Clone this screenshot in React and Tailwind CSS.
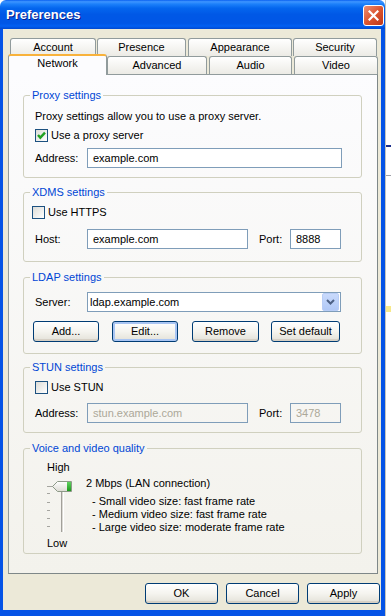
import React from "react";

const font = "font-['Liberation_Sans',Arial,sans-serif]";

const CheckBox = ({ checked, className = "" }) => (
  <span className={`w-[13px] h-[13px] border border-[#1C5180] bg-linear-to-br from-[#DCDCD7] to-white flex items-center justify-center shrink-0 ${className}`}>
    {checked && (
      <svg width="11" height="11" viewBox="0 0 11 11">
        <path d="M2 5 L4.3 7.6 L9 2.6" stroke="#21A121" strokeWidth="2.4" fill="none" />
      </svg>
    )}
  </span>
);

const Field = ({ value, width, disabled }) => (
  <div
    className={`h-[20px] border border-[#7F9DB9] flex items-center pl-[5px] ${disabled ? "bg-transparent text-[#ACA899]" : "bg-white text-black"}`}
    style={{ width }}
  >
    {value}
  </div>
);

const XPButton = ({ children, width, focused }) => (
  <div
    className={`h-[21px] border border-[#003C74] rounded-[3px] bg-linear-to-b from-white via-[#F5F4EF] to-[#E3E1D8] flex items-center justify-center text-black ${focused ? "shadow-[inset_0_0_0_2px_#A9C5F3]" : "shadow-[inset_0_-2px_0_#D6D0C5]"}`}
    style={{ width }}
  >
    {children}
  </div>
);

const Group = ({ title, children, className = "" }) => (
  <fieldset className={`w-[339px] border border-[#D0D0BF] rounded-[3px] ${className}`}>
    <legend className="ml-[6px] px-[2px] leading-[13px] text-[#0046D5]">{title}</legend>
    {children}
  </fieldset>
);

const Tab = ({ label, width, className = "" }) => (
  <div
    className={`h-[18px] border border-b-0 border-[#919B9C] rounded-t-[3px] bg-linear-to-b from-white to-[#ECEBE5] flex items-center justify-center ${className}`}
    style={{ width }}
  >
    {label}
  </div>
);

const Slider = () => (
  <svg width="28" height="55" viewBox="0 0 28 55" className="-ml-[1px]">
    {[7, 14, 23, 31, 39, 47].map((y) => (
      <line key={y} x1="2" x2={y === 7 ? 8 : 5} y1={y + 0.5} y2={y + 0.5} stroke="#A5A5A0" />
    ))}
    <rect x="16" y="10" width="1" height="43" fill="#A2A09A" />
    <rect x="17" y="10" width="1" height="43" fill="#DCDBD5" />
    <rect x="18" y="10" width="1" height="43" fill="#FFFFFF" />
    <defs>
      <linearGradient id="thumb" x1="0" y1="0" x2="0" y2="1">
        <stop offset="0" stopColor="#FFFFFF" />
        <stop offset="1" stopColor="#DCDBD3" />
      </linearGradient>
      <linearGradient id="grn" x1="0" y1="0" x2="0" y2="1">
        <stop offset="0" stopColor="#5FD25F" />
        <stop offset="1" stopColor="#1E9A1E" />
      </linearGradient>
    </defs>
    <path d="M7.5 7.5 L12.5 2.5 H26.5 V12.5 H12.5 Z" fill="url(#thumb)" stroke="#8D9A88" />
    <rect x="22" y="3" width="4" height="9" fill="url(#grn)" />
  </svg>
);

export default function App() {
  return (
    <div className={`w-[391px] h-[616px] bg-white flex overflow-hidden text-[11px] ${font}`}>
      <div className="w-[385px] h-[616px] flex flex-col shrink-0">
        {/* Title bar */}
        <div className="h-[29px] flex items-center justify-between pl-[6px] pr-[1px] rounded-t-[6px] bg-[linear-gradient(to_bottom,#0A60F0_0%,#3D95FF_6%,#1C80FA_14%,#0466EE_28%,#0058E6_50%,#0056E6_80%,#0260F2_90%,#0048D0_100%)]">
          <span className="text-white font-bold text-[13px] [text-shadow:1px_1px_0_#0A1E8A]">Preferences</span>
          <div className="mt-[1px] w-[21px] h-[21px] rounded-[3px] border border-white bg-linear-to-br from-[#EC8E72] via-[#DC5530] to-[#BE3718] flex items-center justify-center">
            <svg width="11" height="11" viewBox="0 0 11 11">
              <path d="M1.5 1.5 L9.5 9.5 M9.5 1.5 L1.5 9.5" stroke="white" strokeWidth="2.2" strokeLinecap="square" />
            </svg>
          </div>
        </div>

        {/* Body */}
        <div className="flex-1 bg-[#ECE9D8] border-l-[3px] border-r-[4px] border-b-[6px] border-[#0553E6] pt-[9px]">
          {/* Tabs row 1 */}
          <div className="flex h-[18px] pl-[7px]">
            <Tab label="Account" width={86} />
            <Tab label="Presence" width={89} className="ml-[1px]" />
            <Tab label="Appearance" width={104} className="ml-[2px]" />
            <Tab label="Security" width={84} className="ml-[1px]" />
          </div>
          {/* Tabs row 2 */}
          <div className="flex items-start h-[18px] pl-[5px]">
            <div className="relative z-10 -mt-[2px] w-[99px] h-[21px] border border-[#919B9C] border-t-[2px] border-t-[#F8B23C] border-b-0 rounded-t-[3px] bg-[#FCFCFE] flex items-center justify-center pb-[4px]">
              Network
            </div>
            <Tab label="Advanced" width={100} />
            <Tab label="Audio" width={83} className="ml-[2px]" />
            <Tab label="Video" width={84} className="ml-[2px]" />
          </div>

          {/* Panel */}
          <div className="ml-[5px] w-[370px] h-[500px] border border-[#919B9C] border-r-[#7E8788] border-b-[#7E8788] bg-linear-to-b from-[#FCFCFE] to-[#F3F2EC] pt-[14px] pl-[14px] text-black">
            <Group title="Proxy settings">
              <div className="pl-[11px] pt-[7px] pb-[9px]">
                <div className="h-[14px] leading-[14px]">Proxy settings allow you to use a proxy server.</div>
                <div className="mt-[5px] h-[14px] flex items-center">
                  <CheckBox checked />
                  <span className="ml-[3px]">Use a proxy server</span>
                </div>
                <div className="mt-[6px] flex items-center">
                  <span className="w-[52px]">Address:</span>
                  <Field value="example.com" width={255} />
                </div>
              </div>
            </Group>

            <Group title="XDMS settings" className="mt-[8px]">
              <div className="pl-[11px] pt-[6px] pb-[12px]">
                <div className="h-[14px] flex items-center">
                  <CheckBox className="-ml-[3px]" />
                  <span className="ml-[3px]">Use HTTPS</span>
                </div>
                <div className="mt-[10px] flex items-center">
                  <span className="w-[52px]">Host:</span>
                  <Field value="example.com" width={161} />
                  <span className="ml-[11px] w-[31px]">Port:</span>
                  <Field value="8888" width={51} />
                </div>
              </div>
            </Group>

            <Group title="LDAP settings" className="mt-[9px]">
              <div className="pl-[11px] pt-[8px] pb-[11px]">
                <div className="flex items-center">
                  <span className="w-[52px]">Server:</span>
                  <div className="w-[254px] h-[20px] border border-[#7F9DB9] bg-white flex items-center justify-between pl-[2px] pr-[1px]">
                    <span>ldap.example.com</span>
                    <div className="w-[17px] h-[18px] rounded-[2px] bg-linear-to-b from-[#C9DAFC] to-[#B0C8F6] border border-[#B8CDF6] flex items-center justify-center">
                      <svg width="9" height="6" viewBox="0 0 9 6">
                        <path d="M1 1 L4.5 4.5 L8 1" stroke="#4D6185" strokeWidth="2" fill="none" />
                      </svg>
                    </div>
                  </div>
                </div>
                <div className="mt-[9px] flex items-center -ml-[2px]">
                  <XPButton width={66}>Add...</XPButton>
                  <div className="ml-[13px]">
                    <XPButton width={66} focused>Edit...</XPButton>
                  </div>
                  <div className="ml-[14px]">
                    <XPButton width={67}>Remove</XPButton>
                  </div>
                  <div className="ml-[12px]">
                    <XPButton width={69}>Set default</XPButton>
                  </div>
                </div>
              </div>
            </Group>

            <Group title="STUN settings" className="mt-[7px]">
              <div className="pl-[11px] pt-[6px] pb-[9px]">
                <div className="h-[14px] flex items-center">
                  <CheckBox />
                  <span className="ml-[3px]">Use STUN</span>
                </div>
                <div className="mt-[9px] flex items-center">
                  <span className="w-[52px]">Address:</span>
                  <Field value="stun.example.com" width={161} disabled />
                  <span className="ml-[11px] w-[31px]">Port:</span>
                  <Field value="3478" width={51} disabled />
                </div>
              </div>
            </Group>

            <Group title="Voice and video quality" className="mt-[9px]">
              <div className="pl-[22px] pt-[5px] pb-[3px] flex">
                <div className="w-[28px] flex flex-col">
                  <div className="h-[14px] leading-[14px] pl-[1px]">High</div>
                  <div className="mt-[5px] h-[55px]">
                    <Slider />
                  </div>
                  <div className="mt-[2px] h-[14px] leading-[14px] pl-[1px]">Low</div>
                </div>
                <div className="ml-[12px] pt-[17px] leading-[13px]">
                  <div>2 Mbps (LAN connection)</div>
                  <div className="mt-[5px] pl-[6px]">
                    <div>- Small video size: fast frame rate</div>
                    <div>- Medium video size: fast frame rate</div>
                    <div>- Large video size: moderate frame rate</div>
                  </div>
                </div>
              </div>
            </Group>
          </div>

          {/* Dialog buttons */}
          <div className="mt-[9px] flex justify-end gap-[8px] pr-[1px]">
            <XPButton width={73}>OK</XPButton>
            <XPButton width={73}>Cancel</XPButton>
            <XPButton width={73}>Apply</XPButton>
          </div>
        </div>
      </div>

      {/* Window behind, right edge */}
      <div className="flex-1 border-l border-[#C7C5BD] bg-white flex flex-col">
        <div className="h-[145px]" />
        <div className="h-[2px] bg-[#1B2E8A]" />
        <div className="h-[28px]" />
        <div className="h-[1px] bg-[#9FA0A8]" />
        <div className="h-[130px]" />
        <div className="h-[6px] bg-[#F7E98B]" />
      </div>
    </div>
  );
}
